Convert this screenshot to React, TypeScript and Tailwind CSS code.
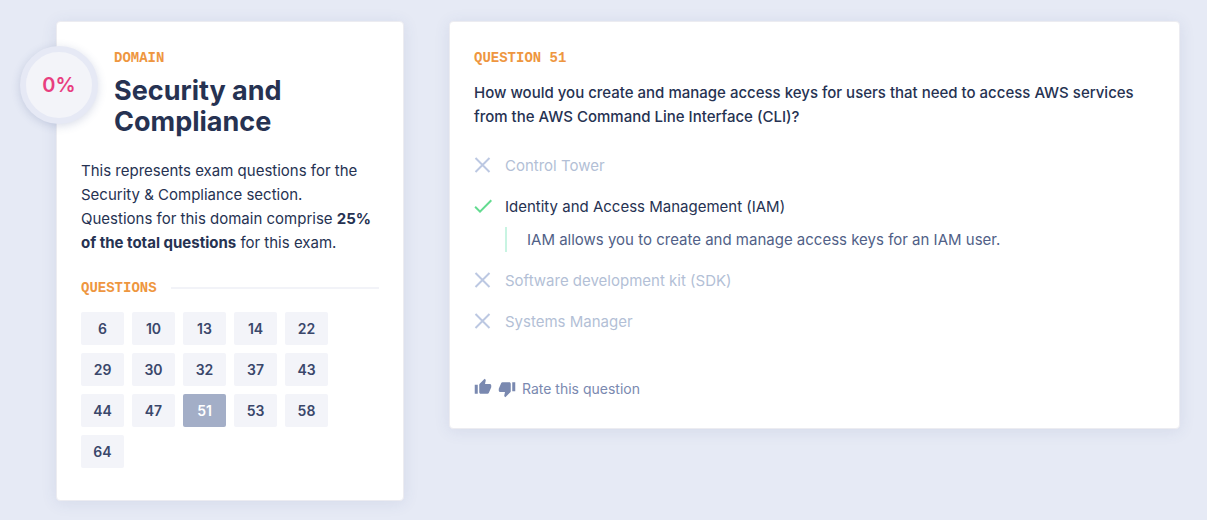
import React from "react";
import { MdCheck, MdThumbDown, MdThumbUp } from "react-icons/md";

const questions = [6, 10, 13, 14, 22, 29, 30, 32, 37, 43, 44, 47, 51, 53, 58, 64];
const current = 51;

type Answer = { text: string; correct?: boolean; note?: string };

const answers: Answer[] = [
  { text: "Control Tower" },
  {
    text: "Identity and Access Management (IAM)",
    correct: true,
    note: "IAM allows you to create and manage access keys for an IAM user.",
  },
  { text: "Software development kit (SDK)" },
  { text: "Systems Manager" },
];

function Eyebrow({ children }: { children: React.ReactNode }) {
  return (
    <p className="font-['Courier_New','Liberation_Mono',monospace] text-sm leading-5 font-bold text-[#ee9640] uppercase">
      {children}
    </p>
  );
}

function Cross() {
  return (
    <svg viewBox="0 0 18 18" className="size-[18px]" fill="none" stroke="#bcc8e2" strokeWidth="2" aria-hidden="true">
      <path d="M1.5 2l14 14M15.5 2L1.5 16" />
    </svg>
  );
}

function DomainCard() {
  return (
    <aside className="relative w-[348px] shrink-0 rounded border border-[#ececf1] bg-white px-6 pt-[26px] pb-8 shadow-[0_2px_16px_rgba(60,80,140,0.1)]">
      <div className="absolute top-6 -left-[37px] flex size-[78px] items-center justify-center rounded-full border-[6px] border-[#e6e9f5] bg-[#f3f4f9] text-xl font-semibold text-[#e83e80] shadow-[0_2px_10px_rgba(60,80,140,0.2)]">
        0%
      </div>
      <header className="pl-[33px]">
        <Eyebrow>Domain</Eyebrow>
        <h1 className="mt-[7px] text-[27px] leading-[31px] font-bold">Security and Compliance</h1>
      </header>
      <p className="mt-[22px] text-[15px] leading-6">
        This represents exam questions for the Security &amp; Compliance section.
        <br />
        Questions for this domain comprise <strong className="font-bold">25% of the total questions</strong> for this
        exam.
      </p>
      <div className="mt-[23px] flex items-center gap-[14px]">
        <Eyebrow>Questions</Eyebrow>
        <div className="h-0.5 flex-1 bg-[#f2f3f8]" />
      </div>
      <nav aria-label="Questions" className="mt-[14px] flex flex-wrap gap-2 pr-10">
        {questions.map((n) => (
          <a
            key={n}
            href={`#question-${n}`}
            aria-current={n === current ? "page" : undefined}
            className={
              n === current
                ? "flex h-[33px] w-[43px] items-center justify-center rounded-xs bg-[#a3aec7] text-sm font-semibold text-white"
                : "flex h-[33px] w-[43px] items-center justify-center rounded-xs bg-[#f3f4f9] text-sm font-semibold text-[#3a476b]"
            }
          >
            {n}
          </a>
        ))}
      </nav>
    </aside>
  );
}

function QuestionCard() {
  return (
    <main className="min-w-0 flex-1 rounded border border-[#ececf1] bg-white px-6 pt-[26px] pb-7 shadow-[0_2px_16px_rgba(60,80,140,0.1)]">
      <Eyebrow>Question 51</Eyebrow>
      <h2 className="mt-[13px] text-[15px] leading-6 font-medium">
        How would you create and manage access keys for users that need to access AWS services from the AWS Command
        Line Interface (CLI)?
      </h2>
      <ul className="mt-[25px] flex flex-col gap-[17px]">
        {answers.map((a) => (
          <li key={a.text} className="flex items-start gap-[13px]">
            <span className="flex h-[22px] w-[18px] shrink-0 items-center justify-center">
              {a.correct ? <MdCheck className="size-6 shrink-0 text-[#63db90]" aria-hidden="true" /> : <Cross />}
            </span>
            <div>
              <p className={a.correct ? "text-[15px] leading-6" : "text-[15px] leading-6 text-[#b3bfd6]"}>{a.text}</p>
              {a.note && (
                <p className="mt-2 border-l-2 border-[#c8f4e2] pl-5 text-[15px] leading-[25px] text-[#515f87]">
                  {a.note}
                </p>
              )}
            </div>
          </li>
        ))}
      </ul>
      <div className="mt-11 flex items-center gap-1.5 text-sm leading-5 text-[#7a89b0]">
        <button type="button" aria-label="Helpful question" className="pb-1">
          <MdThumbUp className="size-[18px]" />
        </button>
        <button type="button" aria-label="Unhelpful question">
          <MdThumbDown className="size-[18px]" />
        </button>
        <span>Rate this question</span>
      </div>
    </main>
  );
}

export default function App() {
  return (
    <div className="flex min-h-screen items-start gap-[45px] bg-[#e6eaf5] pt-[21px] pr-[27px] pb-[19px] pl-14 font-[Inter,sans-serif] text-[#263252]">
      <DomainCard />
      <QuestionCard />
    </div>
  );
}
